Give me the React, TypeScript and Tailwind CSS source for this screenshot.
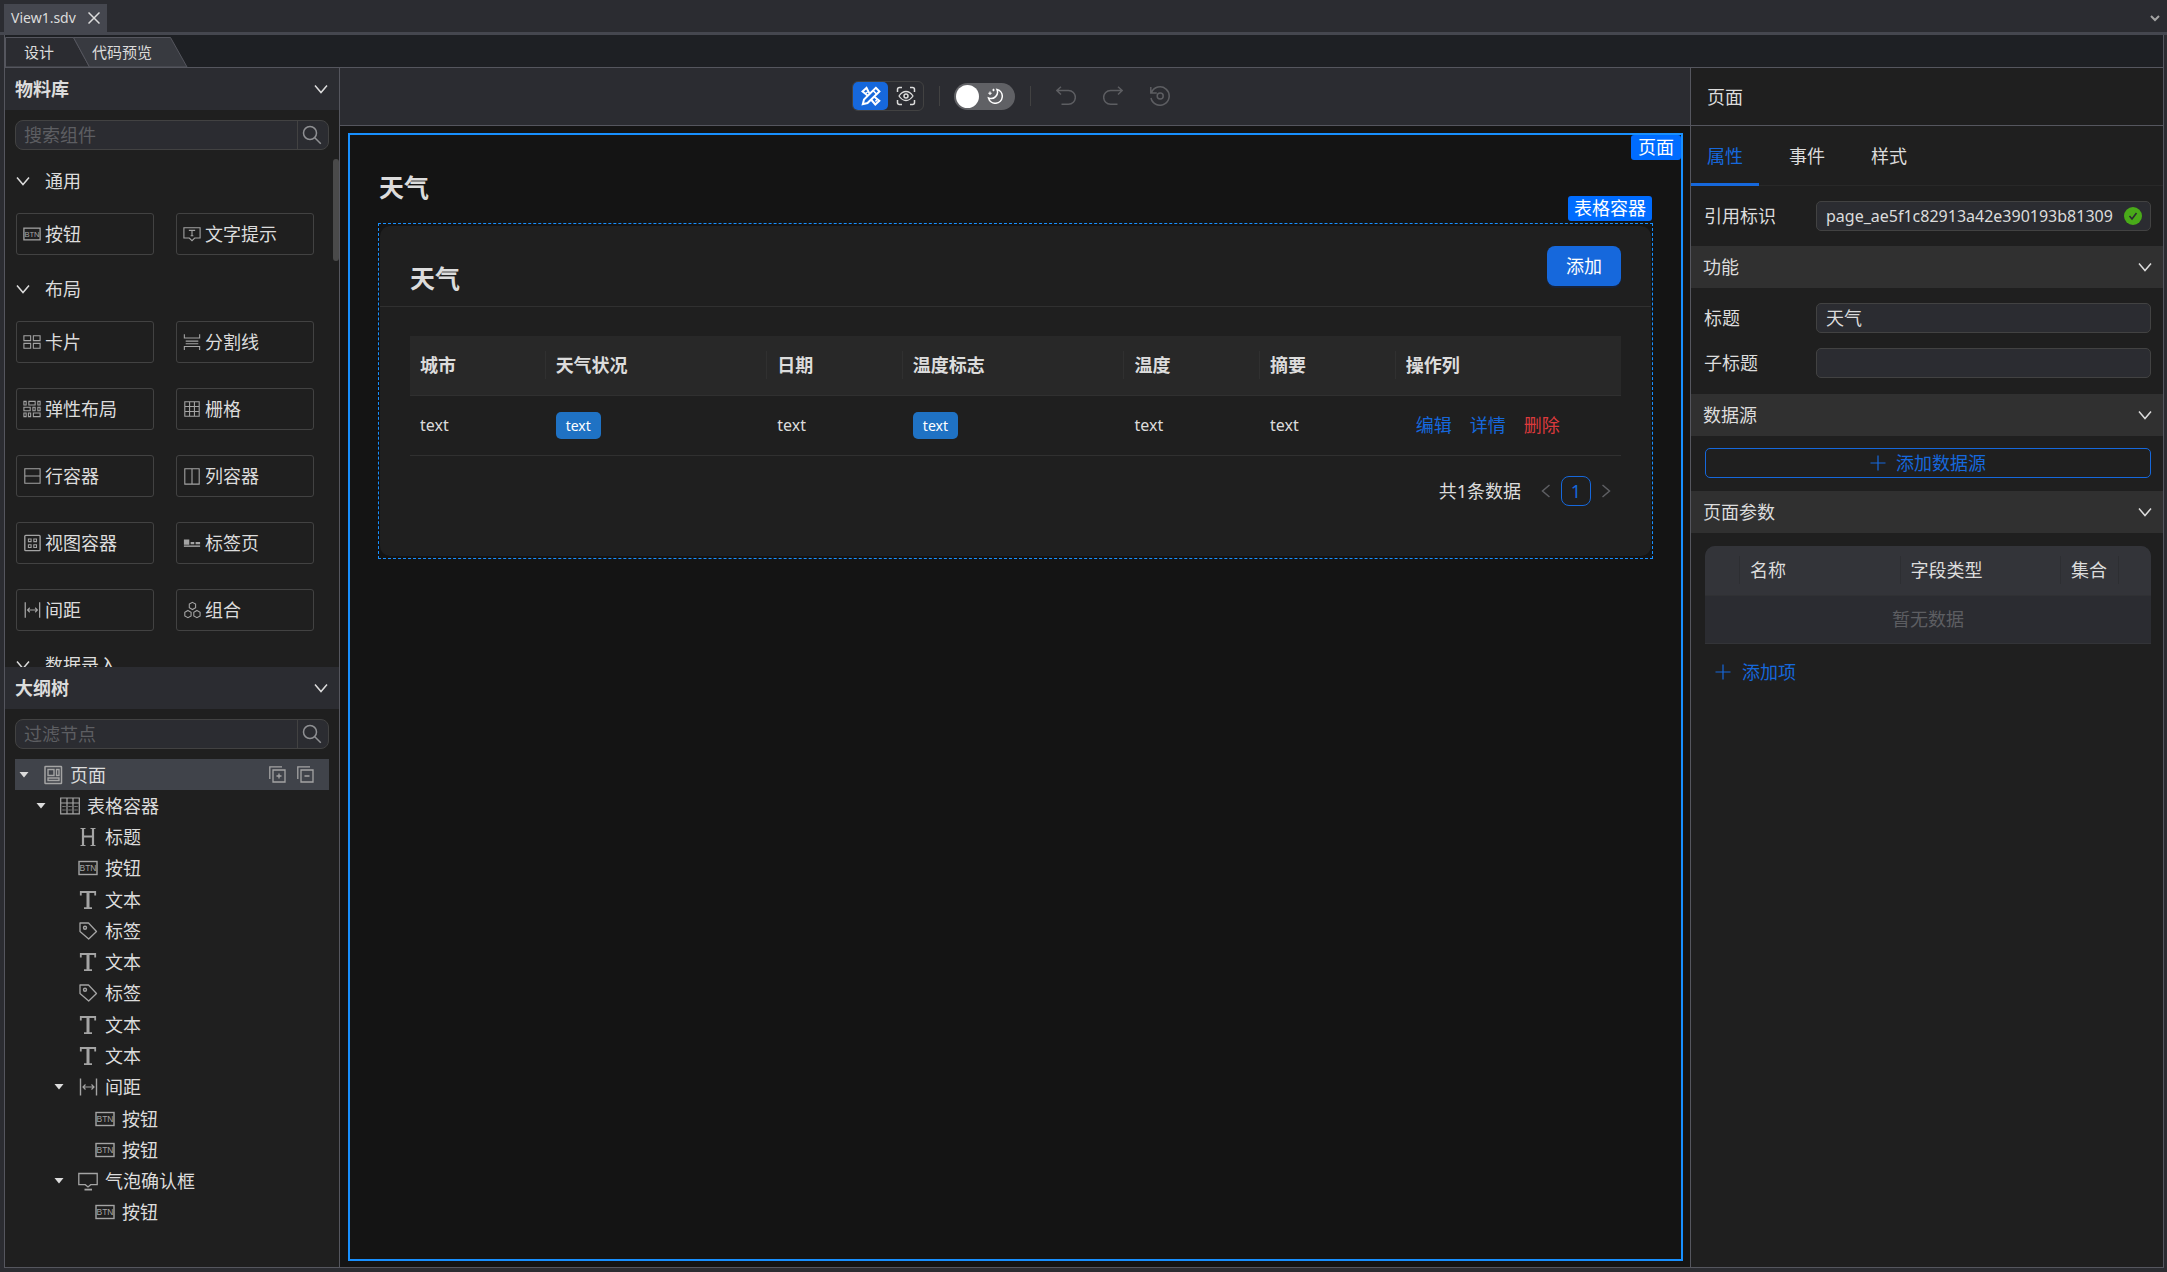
import React from "react";

type IconProps = { className?: string };

const Chevron = ({ className = "size-4" }: IconProps) => (
  <svg viewBox="0 0 16 16" className={className} fill="none" stroke="currentColor" strokeWidth="1.5" aria-hidden="true">
    <path d="M2 4.5 8 11.5 14 4.5" />
  </svg>
);

const Plus = () => (
  <svg viewBox="0 0 16 16" className="size-4" fill="none" stroke="currentColor" strokeWidth="1.2" aria-hidden="true">
    <path d="M8 .5v15M.5 8h15" />
  </svg>
);

const SearchIcon = () => (
  <svg viewBox="0 0 20 20" className="size-5" fill="none" stroke="currentColor" strokeWidth="1.5" aria-hidden="true">
    <circle cx="8" cy="8" r="6.5" />
    <path d="m12.8 12.8 6 6" />
  </svg>
);

const glyphs: Record<string, React.ReactNode> = {
  btn: (
    <>
      <rect x="1" y="3.5" width="18" height="13" strokeWidth="1.4" />
      <text x="10" y="13.4" fontSize="8.5" textAnchor="middle" fill="currentColor" stroke="none" fontFamily="Liberation Sans, sans-serif">
        BTN
      </text>
    </>
  ),
  tip: (
    <>
      <path d="M1 3h18v11.5h-6L10 17.5 7 14.5H1Z" />
      <path d="M6.5 6h7M10 6v6M8.5 12h3" />
    </>
  ),
  card: <path d="M1 3h7.5v5.5H1ZM11.5 3H19v5.5h-7.5ZM1 11.5h7.5V17H1ZM11.5 11.5H19V17h-7.5Z" />,
  divider: <path d="M1.5 1.5v4h17v-4M3 9h14M3 12h14M1.5 19v-4h17v4" />,
  flex: (
    <path d="M1 1.5h2.5v4H1ZM6.5 1.5h7v4h-7ZM16.5 1.5H19v4h-2.5ZM1 8h7v4H1ZM11 8h2.5v4H11ZM16.5 8H19v4h-2.5ZM1 14.5h2.5v4H1ZM6 14.5h2.5v4H6ZM11.5 14.5H19v4h-7.5Z" />
  ),
  grid: <path d="M2 2h16v16H2ZM7.3 2v16M12.7 2v16M2 7.3h16M2 12.7h16" />,
  row: <path d="M2 2h17v16H2ZM2 10h17" />,
  col: <path d="M2 2h16v17H2ZM10 2v17" />,
  view: (
    <>
      <rect x="2" y="1.5" width="17" height="17" rx="1" strokeWidth="1.5" />
      <path d="M6 5.5h3v3H6ZM12 5.5h3v3h-3ZM6 12h3v3H6ZM12 12h3v3h-3Z" />
    </>
  ),
  tabs: (
    <>
      <path d="M1 6h6v6H1ZM8.5 9h4v2.5h-4ZM14 9h5v2.5h-5Z" fill="currentColor" stroke="none" />
      <path d="M1 13.5h18" strokeWidth="1.6" />
    </>
  ),
  space: (
    <>
      <path d="M2.5 1.5v17M18.5 1.5v17" strokeWidth="1.4" />
      <path d="M5 10h11M7.5 7.5 5 10l2.5 2.5M13.5 7.5 16 10l-2.5 2.5" />
    </>
  ),
  group: (
    <path d="M10.5 1.5 14 3.5v4l-3.5 2L7 7.5v-4ZM5.5 10.5 9 12.5v4l-3.5 2L2 16.5v-4ZM15.5 10.5 19 12.5v4l-3.5 2-3.5-2v-4Z" />
  ),
  page: (
    <>
      <rect x="2" y="1.5" width="16.5" height="17" rx=".5" strokeWidth="1.5" />
      <path d="M5 4.5h6v6H5ZM13.5 4.5H16v6h-2.5ZM5 13h11v2.5H5Z" strokeWidth="1.4" />
    </>
  ),
  table: (
    <>
      <path d="M.7 2h18.6v15.8H.7ZM.7 7h18.6M7 2v15.8M13 2v15.8" />
      <path d="M2.5 10.5h3M2.5 14h3M8.5 10.5h3M8.5 14h3M14.5 10.5h3M14.5 14h3" strokeDasharray="1.2 .7" />
    </>
  ),
  heading: (
    <>
      <path d="M5 1.5v17M15 1.5v17M5 9.5h10" strokeWidth="2.2" />
      <path d="M2.5 1.5h5M12.5 1.5h5M2.5 18.5h5M12.5 18.5h5" />
    </>
  ),
  text: (
    <>
      <path d="M2.8 5.5V2h14.4v3.500M6 18.2h8" strokeWidth="1.800" />
      <path d="M10 2v16" strokeWidth="3" />
    </>
  ),
  tag: (
    <>
      <path d="M2 2h8.500l8 8.500-7.800 7.500L2 10.500Z" strokeWidth="1.300" strokeLinejoin="round" />
      <circle cx="7" cy="6.800" r="1.500" strokeWidth="1.400" />
    </>
  ),
  popover: (
    <>
      <path d="M.8 2.500h18.400v11.200h-6.500L10 16l-2.700-2.300H.8Z" strokeWidth="1.300" />
      <path d="M6.500 18.600H14" strokeWidth="1.800" />
    </>
  ),
};

const Glyph = ({ name, className = "size-5" }: { name: string; className?: string }) => (
  <svg viewBox="0 0 20 20" className={`shrink-0 text-[#a4a4a4] ${className}`} fill="none" stroke="currentColor" strokeWidth="1.2" aria-hidden="true">
    {glyphs[name]}
  </svg>
);

const materials = [
  { title: "通用", items: [["btn", "按钮"], ["tip", "文字提示"]] },
  {
    title: "布局",
    items: [
      ["card", "卡片"],
      ["divider", "分割线"],
      ["flex", "弹性布局"],
      ["grid", "栅格"],
      ["row", "行容器"],
      ["col", "列容器"],
      ["view", "视图容器"],
      ["tabs", "标签页"],
      ["space", "间距"],
      ["group", "组合"],
    ],
  },
  { title: "数据录入", items: [] },
];

const tree: { level: number; icon: string; label: string; open?: boolean }[] = [
  { level: 0, icon: "page", label: "页面", open: true },
  { level: 1, icon: "table", label: "表格容器", open: true },
  { level: 2, icon: "heading", label: "标题" },
  { level: 2, icon: "btn", label: "按钮" },
  { level: 2, icon: "text", label: "文本" },
  { level: 2, icon: "tag", label: "标签" },
  { level: 2, icon: "text", label: "文本" },
  { level: 2, icon: "tag", label: "标签" },
  { level: 2, icon: "text", label: "文本" },
  { level: 2, icon: "text", label: "文本" },
  { level: 2, icon: "space", label: "间距", open: true },
  { level: 3, icon: "btn", label: "按钮" },
  { level: 3, icon: "btn", label: "按钮" },
  { level: 2, icon: "popover", label: "气泡确认框", open: true },
  { level: 3, icon: "btn", label: "按钮" },
];

const indents = ["pl-0", "pl-[17px]", "pl-[35px]", "pl-[52px]"];

const PanelHead = ({ title }: { title: string }) => (
  <header className="flex h-[42px] shrink-0 items-center justify-between bg-[#2b2c31] px-[10px]">
    <h2 className="font-bold">{title}</h2>
    <button aria-label={`收起${title}`}>
      <Chevron />
    </button>
  </header>
);

const SearchBox = ({ label }: { label: string }) => (
  <div className="mx-[10px] mt-[10px] flex h-[30px] shrink-0 rounded-lg border border-[#424242] bg-[#2b2c31]">
    <input
      aria-label={label}
      placeholder={label}
      className="min-w-0 flex-1 rounded-l-lg bg-transparent px-2 outline-none placeholder:text-[#5d5e62]"
    />
    <button aria-label={`搜索：${label}`} className="flex w-[31px] items-center justify-center border-l border-[#424242] pr-[2px] text-[#8f9093]">
      <SearchIcon />
    </button>
  </div>
);

function MaterialPanel() {
  return (
    <section className="flex h-[599px] shrink-0 flex-col">
      <PanelHead title="物料库" />
      <SearchBox label="搜索组件" />
      <div className="relative min-h-0 flex-1 overflow-hidden pt-[11px]">
        {materials.map((group) => (
          <div key={group.title}>
            <button className="flex h-10 w-full items-center gap-[14px] pl-[10px]">
              <Chevron />
              <span>{group.title}</span>
            </button>
            <div className="grid grid-cols-2 gap-x-[22px] gap-y-[25px] pt-3 pr-[25px] pb-[14px] pl-[11px]">
              {group.items.map(([icon, label]) => (
                <button key={label} className="flex h-[42px] items-center gap-1 rounded-[3px] border border-[#424242] pl-[6px]">
                  <Glyph name={icon} className="size-[18px]" />
                  <span>{label}</span>
                </button>
              ))}
            </div>
          </div>
        ))}
        <div className="absolute top-[9px] right-0 h-[102px] w-[6px] rounded-full bg-[#4a4a4a]" />
      </div>
    </section>
  );
}

const CopyIcon = ({ plus }: { plus?: boolean }) => (
  <svg viewBox="0 0 17 17" className="size-[17px]" fill="none" stroke="#a4a4a4" strokeWidth="1.3" aria-hidden="true">
    <path d="M.8 13V.8H13M4 4h12v12H4ZM7.5 10h5" />
    {plus && <path d="M10 7.5v5" />}
  </svg>
);

function OutlinePanel() {
  return (
    <section className="flex min-h-0 flex-1 flex-col">
      <PanelHead title="大纲树" />
      <SearchBox label="过滤节点" />
      <ul className="mx-[10px] mt-[10px] grid h-[469px] auto-rows-fr">
        {tree.map((node, i) => (
          <li key={i} className={`flex items-center ${indents[node.level]} ${i === 0 ? "bg-[#40434a]" : ""}`}>
            <span className="flex w-[18px] justify-center">
              {node.open && (
                <svg viewBox="0 0 10 6" className="h-[6px] w-[10px]" fill="#dcdcdc" aria-hidden="true">
                  <path d="M.5 0h9L5 5.5Z" />
                </svg>
              )}
            </span>
            <span className="ml-[10px] flex flex-1 items-center gap-[7px]">
              <Glyph name={node.icon} />
              {node.label}
            </span>
            {i === 0 && (
              <span className="flex gap-[11px] pr-[15px]">
                <button aria-label="全部展开">
                  <CopyIcon plus />
                </button>
                <button aria-label="全部折叠">
                  <CopyIcon />
                </button>
              </span>
            )}
          </li>
        ))}
      </ul>
    </section>
  );
}

function Toolbar() {
  return (
    <div className="flex h-[58px] shrink-0 items-center justify-center border-b border-[#55565e] bg-[#2b2c31] pb-px pl-[2px]">
      <div className="flex h-[30px] rounded-md border border-[#424242]">
        <button aria-label="设计模式" className="flex w-[35px] items-center justify-center rounded-[5px] bg-[#1668dc] text-white">
          <svg viewBox="0 0 20 20" className="size-5" fill="none" stroke="currentColor" strokeWidth="2" aria-hidden="true">
            <path d="M8.2 7.300 5.500 1.800 1.500 5.500 6.500 9.500M13 10.500l5.300 4.200-4 3.800-4.300-5" />
            <path d="m14.800 1.800 3.600 3.600L6.500 17l-4.700 1.200L3 13.500Z" />
            <path d="M4.500 7.500 6.500 6M14.500 15.500l1.500-2M12 4.500 15.500 8" strokeWidth="1.500" />
          </svg>
        </button>
        <button aria-label="预览模式" className="flex w-[35px] items-center justify-center text-[#dcdcdc]">
          <svg viewBox="0 0 20 20" className="size-5" fill="none" stroke="currentColor" strokeWidth="1.5" aria-hidden="true">
            <path d="M1.500 6V3.500q0-2 2-2H6M14 1.500h2.500q2 0 2 2V6M18.500 14v2.500q0 2-2 2H14M6 18.500H3.500q-2 0-2-2V14" />
            <path d="M3 10q3-4.500 7-4.500T17 10q-3 4.500-7 4.500T3 10Z" strokeWidth="1.300" />
            <circle cx="10" cy="10" r="2" />
          </svg>
        </button>
      </div>
      <span className="mr-[14px] ml-[15px] h-5 w-px bg-[#424242]" />
      <button role="switch" aria-checked="false" aria-label="深色主题" className="flex h-[27px] w-[61px] items-center gap-2 rounded-full bg-[#606165] pl-[2px]">
        <span className="size-[23px] rounded-full bg-white" />
        <svg viewBox="0 0 16 16" className="size-4" fill="none" stroke="#fff" strokeWidth="1.5" aria-hidden="true">
          <path d="M10 1.500A7 7 0 1 1 1.500 10 6.500 6.500 0 0 0 10 1.500Z" />
          <path d="M3 3.500v3.400M1.300 5.200h3.400M6.500 .8v2.400M5.300 2h2.400" strokeWidth="1.100" />
        </svg>
      </button>
      <span className="mr-[14px] ml-[15px] h-5 w-px bg-[#424242]" />
      <div className="flex gap-[6px] text-[#5d5e62]">
        <button aria-label="撤销" className="flex h-9 w-[41px] items-center justify-center">
          <svg viewBox="0 0 20 20" className="size-5" fill="none" stroke="currentColor" strokeWidth="1.5" aria-hidden="true">
            <path d="M5 .8.800 4.500 5 8.500M1 4.500h11.500a6.700 6.700 0 0 1 0 13.700H5.500" />
          </svg>
        </button>
        <button aria-label="重做" className="flex h-9 w-[41px] items-center justify-center">
          <svg viewBox="0 0 20 20" className="size-5" fill="none" stroke="currentColor" strokeWidth="1.5" aria-hidden="true">
            <path d="M15 .8 19.200 4.500 15 8.500M19 4.500H7.500a6.700 6.700 0 0 0 0 13.700h7" />
          </svg>
        </button>
        <button aria-label="历史记录" className="flex h-9 w-[41px] items-center justify-center">
          <svg viewBox="0 0 20 20" className="size-5" fill="none" stroke="currentColor" strokeWidth="1.5" aria-hidden="true">
            <path d="M.8 1v6h6M1.500 6.500A9.200 9.200 0 1 1 1 12" />
            <circle cx="10.200" cy="10" r="3" />
          </svg>
        </button>
      </div>
    </div>
  );
}

const columns = ["城市", "天气状况", "日期", "温度标志", "温度", "摘要", "操作列"];

function Canvas() {
  return (
    <div className="flex min-h-0 flex-1 bg-[#141414] pt-[7px] pr-[7px] pb-[6px] pl-2">
      <main className="relative flex-1 border-2 border-[#1890ff] px-7 pt-8">
        <span className="absolute top-0 right-0 rounded-[3px] bg-[#006cff] px-[7px] leading-[25px] text-white">页面</span>
        <h1 className="pl-px text-[25px] leading-10 font-bold">天气</h1>
        <section className="relative mt-4 border border-dashed border-[#1890ff] px-px py-[2px]">
          <span className="absolute right-0 bottom-full mb-[3px] rounded-[3px] bg-[#006cff] px-[6px] leading-[25px] text-white">表格容器</span>
          <div className="rounded-[10px] bg-[#1f1f1f]">
            <header className="flex h-[81px] items-start justify-between border-b border-[#303030] px-[30px] pt-5">
              <h2 className="mt-3 text-[25px] leading-10 font-bold">天气</h2>
              <button className="h-10 w-[74px] rounded-lg bg-[#1668dc] text-white shadow-[0_2px_0_#17233b]">添加</button>
            </header>
            <div className="px-[30px] pt-[29px] pb-[50px]">
              <table className="w-full table-fixed border-collapse text-left">
                <colgroup>
                  <col className="w-[11.2%]" />
                  <col className="w-[18.3%]" />
                  <col className="w-[11.2%]" />
                  <col className="w-[18.3%]" />
                  <col className="w-[11.2%]" />
                  <col className="w-[11.2%]" />
                  <col />
                </colgroup>
                <thead>
                  <tr className="h-[59px] border-b border-[#303030] bg-[#282828]">
                    {columns.map((name, i) => (
                      <th key={name} scope="col" className="p-0 font-bold">
                        <div className={`flex h-7 items-center pl-[10px] ${i < 6 ? "border-r border-[#303030]" : ""}`}>{name}</div>
                      </th>
                    ))}
                  </tr>
                </thead>
                <tbody>
                  <tr className="h-[60px] border-b border-[#303030]">
                    {columns.slice(0, 6).map((name) => (
                      <td key={name} className="p-0 pl-[10px] text-base">
                        {name === "天气状况" || name === "温度标志" ? (
                          <span className="inline-block rounded-[5px] bg-[#1f72c4] px-[10px] text-sm leading-[27px] text-white">text</span>
                        ) : (
                          "text"
                        )}
                      </td>
                    ))}
                    <td className="p-0 pl-5">
                      <div className="flex gap-[18px] text-[#1668dc]">
                        <a href="#edit">编辑</a>
                        <a href="#detail">详情</a>
                        <a href="#remove" className="text-[#dc3a3d]">
                          删除
                        </a>
                      </div>
                    </td>
                  </tr>
                </tbody>
              </table>
              <nav aria-label="分页" className="mt-5 flex h-[30px] items-center justify-end">
                <span className="mr-4">共1条数据</span>
                <button aria-label="上一页" className="flex w-[18px] justify-center text-[#5d5e62]">
                  <Chevron className="size-4 rotate-90" />
                </button>
                <button className="mx-[6px] size-[30px] rounded-lg border border-[#1668dc] text-[#1668dc]">1</button>
                <button aria-label="下一页" className="mr-[6px] flex w-[18px] justify-center text-[#5d5e62]">
                  <Chevron className="size-4 -rotate-90" />
                </button>
              </nav>
            </div>
          </div>
        </section>
      </main>
    </div>
  );
}

const SectionHead = ({ title }: { title: string }) => (
  <button className="flex h-[42px] w-full items-center justify-between bg-[#303030] pr-[10px] pl-3">
    <span>{title}</span>
    <Chevron />
  </button>
);

const Field = ({ id, label, value, valid }: { id: string; label: string; value: string; valid?: boolean }) => (
  <div className="flex items-center pr-3 pl-[13px]">
    <label htmlFor={id} className="w-[112px] shrink-0">
      {label}
    </label>
    <div className="flex h-[30px] min-w-0 flex-1 items-center rounded-[5px] border border-[#424242] bg-[#2b2c31] pr-2 pl-[9px]">
      <input id={id} defaultValue={value} className={`min-w-0 flex-1 bg-transparent outline-none ${valid ? "text-base" : ""}`} />
      {valid && (
        <svg viewBox="0 0 18 18" className="ml-1 size-[18px] shrink-0" aria-hidden="true">
          <circle cx="9" cy="9" r="9" fill="#49aa19" />
          <path d="m5.500 9 2.500 3 4.500-6" fill="none" stroke="#2b2c31" strokeWidth="1.600" />
        </svg>
      )}
    </div>
  </div>
);

function PropertyPanel() {
  return (
    <aside className="flex w-[473px] shrink-0 flex-col border-l border-[#55565e] bg-[#1f1f1f]">
      <h2 className="flex h-[58px] items-center border-b border-[#55565e] pl-4">页面</h2>
      <div role="tablist" className="flex h-[60px] gap-[14px] border-b border-[#282828]">
        <button role="tab" aria-selected="true" className="h-[60px] border-y-[3px] border-t-transparent border-b-[#1668dc] px-4 text-[#1668dc]">
          属性
        </button>
        <button role="tab" aria-selected="false" className="px-4">
          事件
        </button>
        <button role="tab" aria-selected="false" className="px-4">
          样式
        </button>
      </div>
      <div className="py-[15px]">
        <Field id="ref" label="引用标识" value="page_ae5f1c82913a42e390193b81309" valid />
      </div>
      <SectionHead title="功能" />
      <div className="grid gap-[15px] pt-[15px] pb-4">
        <Field id="title" label="标题" value="天气" />
        <Field id="subtitle" label="子标题" value="" />
      </div>
      <SectionHead title="数据源" />
      <div className="pt-3 pr-3 pb-[13px] pl-[14px]">
        <button className="flex h-[30px] w-full items-center justify-center gap-[10px] rounded-[5px] border border-[#1668dc] text-[#1668dc]">
          <Plus />
          添加数据源
        </button>
      </div>
      <SectionHead title="页面参数" />
      <div className="py-[13px] pr-3 pl-[14px]">
        <div className="overflow-hidden rounded-t-[10px]">
          <table className="w-full table-fixed border-collapse bg-[#2b2c31] text-left">
            <colgroup>
              <col className="w-[35px]" />
              <col />
              <col />
              <col className="w-[58px]" />
              <col className="w-[32px]" />
            </colgroup>
            <thead>
              <tr className="h-[49px] border-b border-[#303134] bg-[#333439]">
                {["", "名称", "字段类型", "集合", ""].map((name, i) => (
                  <th key={i} scope="col" className="p-0 font-normal">
                    <div className={`flex h-7 items-center pl-[10px] whitespace-nowrap ${i < 4 ? "border-r border-[#2d2e32]" : ""}`}>{name}</div>
                  </th>
                ))}
              </tr>
            </thead>
            <tbody>
              <tr className="h-12 border-b border-[#333438]">
                <td colSpan={5} className="p-0 text-center text-[#5d5e62]">
                  暂无数据
                </td>
              </tr>
            </tbody>
          </table>
        </div>
        <button className="mt-[14px] ml-[10px] flex h-7 items-center gap-[11px] text-[#1668dc]">
          <Plus />
          添加项
        </button>
      </div>
    </aside>
  );
}

export default function App() {
  return (
    <div className="flex h-screen flex-col bg-[#2b2c31] font-['Noto_Sans','Noto_Sans_CJK_SC',sans-serif] text-[18px] leading-6 text-[#dcdcdc]">
      <div className="flex h-[35px] shrink-0 items-start justify-between border-b-[3px] border-[#45474f] pt-1 pr-[6px] pl-1">
        <div className="flex h-7 items-center gap-3 bg-[#45474f] pr-[7px] pl-[7px] text-sm">
          <span>View1.sdv</span>
          <button aria-label="关闭 View1.sdv">
            <svg viewBox="0 0 12 12" className="size-3" fill="none" stroke="currentColor" strokeWidth="1.5" aria-hidden="true">
              <path d="m.5 .5 11 11M11.5 .5l-11 11" />
            </svg>
          </button>
        </div>
        <button aria-label="更多标签页" className="mt-2 text-[#a4a4a4]">
          <svg viewBox="0 0 12 12" className="size-3" fill="none" stroke="currentColor" strokeWidth="2" aria-hidden="true">
            <path d="m2 4 4 4 4-4" />
          </svg>
        </button>
      </div>
      <div className="mr-[3px] ml-1 flex min-h-0 flex-1 flex-col border-x border-b border-[#55565e]">
        <div className="flex h-[33px] shrink-0 items-end border-b border-[#55565e] bg-[#1e2024] pt-[2px]">
          <div className="relative flex h-full text-[15px]">
            <svg viewBox="0 0 184 30" className="absolute inset-0 h-full w-[184px]" stroke="#55565e" aria-hidden="true">
              <path d="M.5 30V.5h68L84.5 30Z" fill="#2b2c31" />
              <path d="M68.5 .5h97L182 30H84.500Z" fill="#383a40" />
            </svg>
            <button className="relative w-[67px] pl-[19px] text-left">设计</button>
            <button className="relative w-[117px] pl-5 text-left">代码预览</button>
          </div>
        </div>
        <div className="flex min-h-0 flex-1">
          <aside className="flex w-[335px] shrink-0 flex-col border-r border-[#55565e] bg-[#1f1f1f]">
            <MaterialPanel />
            <OutlinePanel />
          </aside>
          <div className="flex min-w-0 flex-1 flex-col">
            <Toolbar />
            <Canvas />
          </div>
          <PropertyPanel />
        </div>
      </div>
      <div className="h-1 shrink-0" />
    </div>
  );
}
